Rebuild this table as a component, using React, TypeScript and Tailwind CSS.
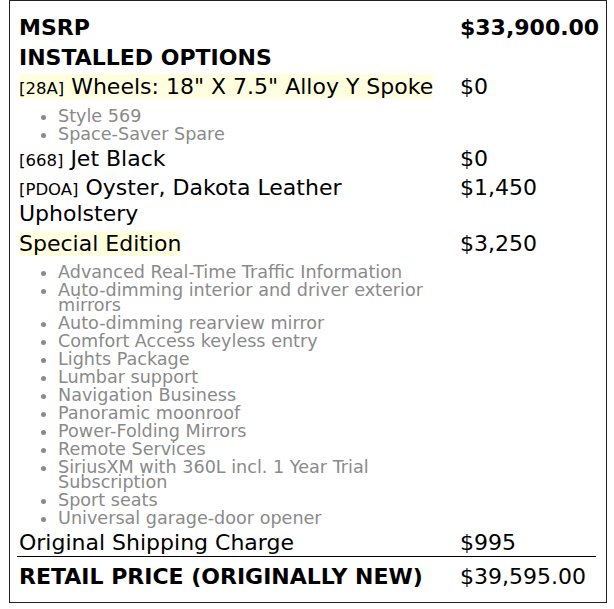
import React from 'react';

type Option = {
    code?: string;
    name: string;
    price: string;
    highlight?: boolean;
    features?: string[];
};

const options: Option[] = [
    { code: '28A', name: 'Wheels: 18" X 7.5" Alloy Y Spoke', price: '$0', highlight: true, features: ['Style 569', 'Space-Saver Spare'] },
    { code: '668', name: 'Jet Black', price: '$0' },
    { code: 'PDOA', name: 'Oyster, Dakota Leather Upholstery', price: '$1,450' },
    {
        name: 'Special Edition',
        price: '$3,250',
        highlight: true,
        features: [
            'Advanced Real-Time Traffic Information',
            'Auto-dimming interior and driver exterior mirrors',
            'Auto-dimming rearview mirror',
            'Comfort Access keyless entry',
            'Lights Package',
            'Lumbar support',
            'Navigation Business',
            'Panoramic moonroof',
            'Power-Folding Mirrors',
            'Remote Services',
            'SiriusXM with 360L incl. 1 Year Trial Subscription',
            'Sport seats',
            'Universal garage-door opener',
        ],
    },
];

const Row: React.FC<{ left: React.ReactNode; right: React.ReactNode; className?: string }> = ({ left, right, className }) => (
    <div className={`grid grid-cols-[441px_138px] ${className || ''}`}>
        <div className="px-[2px] py-[2px]">{left}</div>
        <div className="px-[2px] py-[2px]">{right}</div>
    </div>
);

const App: React.FC = () => {
    return (
        <div className="bg-white w-[614px] h-[609px] text-black" style={{ fontFamily: '"DejaVu Sans", sans-serif' }}>
            <div className="ml-[9px] w-[598px] h-[603px] border border-[#222] pt-[12px] pl-[7px]">
                <div className="w-[579px] text-[22px] leading-[25.6px]">
                    <Row className="font-bold" left="MSRP" right="$33,900.00" />
                    <Row className="font-bold" left="INSTALLED OPTIONS" right="" />
                    {options.map(opt => (
                        <Row
                            key={opt.name}
                            left={
                                <>
                                    <span className={opt.highlight ? 'bg-[#ffffe0]' : ''}>
                                        {opt.code && <><span className="text-[16.5px] leading-[16px]">[{opt.code}]</span>{' '}</>}
                                        {opt.name}
                                    </span>
                                    {opt.features && (
                                        <ul className="list-disc pl-[39px] mt-[9px] text-[17.6px] leading-[15px] text-[#8a8a8a]">
                                            {opt.features.map(f => (
                                                <li key={f} className="mt-[3px]">{f}</li>
                                            ))}
                                        </ul>
                                    )}
                                </>
                            }
                            right={opt.price}
                        />
                    ))}
                    <div className="grid grid-cols-[441px_138px] border-b border-black">
                        <div className="px-[2px] pt-[2px]">Original Shipping Charge</div>
                        <div className="px-[2px] pt-[2px]">$995</div>
                    </div>
                    <div className="grid grid-cols-[441px_138px]">
                        <div className="px-[2px] pt-[7px] font-bold">RETAIL PRICE (ORIGINALLY NEW)</div>
                        <div className="px-[2px] pt-[7px]">$39,595.00</div>
                    </div>
                </div>
            </div>
        </div>
    );
};

export default App;
